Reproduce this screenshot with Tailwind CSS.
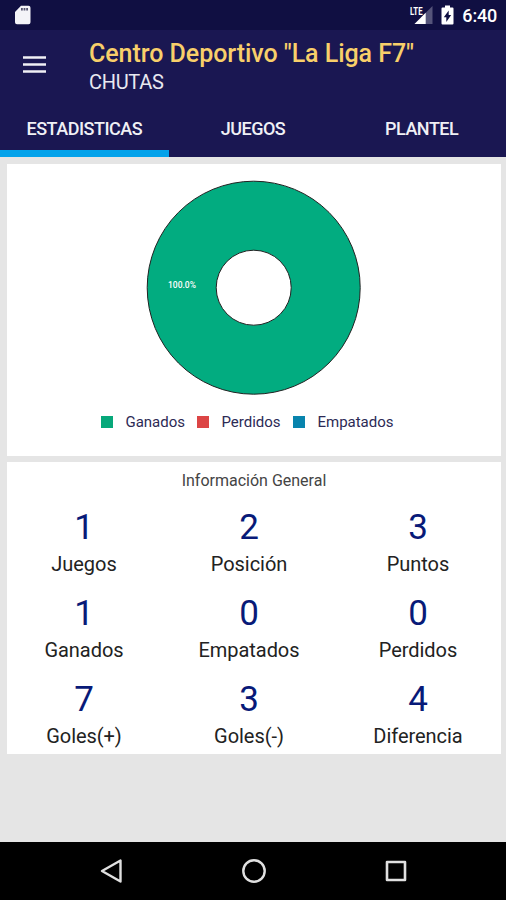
<!DOCTYPE html>
<html lang="es">
<head>
  <meta charset="UTF-8">
  <meta name="viewport" content="width=device-width, initial-scale=1.0">
  <title>Centro Deportivo "La Liga F7"</title>
  <script src="https://cdn.jsdelivr.net/npm/@tailwindcss/browser@4"></script>
</head>
<body class="flex h-[900px] w-[506px] flex-col overflow-hidden bg-[#e5e5e5] font-['Roboto',sans-serif]">
  <!-- Status bar -->
  <div class="flex h-[30px] shrink-0 items-center justify-between bg-[#100f42] pr-[9px] pl-[14px] text-white">
    <svg class="h-[20px] w-[17px]" viewBox="0 0 17 20">
      <path fill="#f4f4f8" d="M7 .8h7.500a2 2 0 0 1 2 2v14.400a2 2 0 0 1-2 2h-11.500a2 2 0 0 1-2-2V7z"/>
      <path stroke="#55546f" stroke-width="2.400" stroke-dasharray="1.800 .8" d="M7 4.200h7.500"/>
    </svg>
    <div class="flex items-center">
      <svg class="h-[20px] w-[24px]" viewBox="0 0 24 20">
        <path fill="#55547a" d="M23.500 1v18H5.500z"/>
        <path fill="#100f42" d="M0 0h13.500v11H0z"/>
        <path fill="#fff" d="M16.700 7.800V19H5.500z"/>
        <text x="1" y="9.800" font-size="11" font-weight="700" textLength="12.500" lengthAdjust="spacingAndGlyphs" fill="#fff">LTE</text>
      </svg>
      <svg class="ml-[8px] h-[20px] w-[13px]" viewBox="0 0 13 20">
        <path fill="#fff" d="M4 .5h5v2h2.500a1 1 0 0 1 1 1v15a1 1 0 0 1-1 1h-10a1 1 0 0 1-1-1v-15a1 1 0 0 1 1-1H4z"/>
        <path fill="#100f42" d="M7.700 5.500v4.500h2.500L5.300 17v-4.700H2.800z"/>
      </svg>
      <span class="ml-[8px] pt-[2px] text-[18px] leading-none font-medium tracking-[-0.2px]">6:40</span>
    </div>
  </div>

  <!-- App bar -->
  <header class="flex h-[127px] shrink-0 flex-col bg-[#1a1752] text-white">
    <div class="flex h-[70px] pl-[23px]">
      <svg class="mt-[26px] h-[17px] w-[23px]" viewBox="0 0 23 17">
        <path stroke="#f0f0f5" stroke-width="2.600" d="M0 1.500h23M0 8.500h23M0 15.500h23"/>
      </svg>
      <div class="ml-[43px] pt-[8px]">
        <h1 class="text-[25px] leading-[31px] font-medium tracking-[-0.05px] whitespace-nowrap text-[#f8cf6a]">Centro Deportivo "La Liga F7"</h1>
        <p class="text-[20px] leading-[27px] tracking-[-0.3px] text-[#e8e8f0]">CHUTAS</p>
      </div>
    </div>
    <nav class="grid flex-1 grid-cols-3 text-center text-[18px] font-medium tracking-[-0.5px] text-[#f0f0f5]">
      <a class="border-b-[7px] border-[#03a2ea] pt-[15px]">ESTADISTICAS</a>
      <a class="pt-[15px]">JUEGOS</a>
      <a class="pt-[15px]">PLANTEL</a>
    </nav>
  </header>

  <main class="flex flex-1 flex-col gap-[6px] pt-[7px] pr-[5px] pl-[7px]">
    <!-- Results chart -->
    <section class="flex h-[292px] flex-col items-center bg-white">
      <svg class="mt-[16px] h-[216px] w-[216px]" viewBox="0 0 216 216">
        <circle cx="107.700" cy="107.700" r="72" fill="none" stroke="#02ac80" stroke-width="69"/>
        <circle cx="107.700" cy="107.700" r="106.500" fill="none" stroke="#222" stroke-width="1"/>
        <circle cx="107.700" cy="107.700" r="37.500" fill="none" stroke="#222" stroke-width="1"/>
        <text x="36" y="108" font-size="8.500" font-weight="500" text-anchor="middle" fill="#fff">100.0%</text>
      </svg>
      <div class="mt-[16px] flex items-center pr-[13px] text-[15px] leading-[20px] text-[#2c2a55]">
        <i class="mr-[12px] size-[12px] bg-[#07a87a]"></i><span class="w-[72px]">Ganados</span>
        <i class="mr-[12px] size-[12px] bg-[#dc4545]"></i><span class="w-[72px]">Perdidos</span>
        <i class="mr-[12px] size-[12px] bg-[#0884ad]"></i><span>Empatados</span>
      </div>
    </section>

    <!-- General stats -->
    <section class="h-[292px] bg-white">
      <h2 class="pt-[9px] text-center text-[16px] leading-[20px] text-[#444]">Información General</h2>
      <div class="mt-[16px] grid auto-rows-[86px] grid-cols-[154px_176px_162px] text-center text-[20px] text-[#222]">
        <div><div class="text-[35px] leading-[42px] text-[#081a78]">1</div><div class="leading-[31px] tracking-[-0.05px]">Juegos</div></div>
        <div><div class="text-[35px] leading-[42px] text-[#081a78]">2</div><div class="leading-[31px] tracking-[-0.05px]">Posición</div></div>
        <div><div class="text-[35px] leading-[42px] text-[#081a78]">3</div><div class="leading-[31px] tracking-[-0.05px]">Puntos</div></div>
        <div><div class="text-[35px] leading-[42px] text-[#081a78]">1</div><div class="leading-[31px] tracking-[-0.05px]">Ganados</div></div>
        <div><div class="text-[35px] leading-[42px] text-[#081a78]">0</div><div class="leading-[31px] tracking-[-0.05px]">Empatados</div></div>
        <div><div class="text-[35px] leading-[42px] text-[#081a78]">0</div><div class="leading-[31px] tracking-[-0.05px]">Perdidos</div></div>
        <div><div class="text-[35px] leading-[42px] text-[#081a78]">7</div><div class="leading-[31px] tracking-[-0.05px]">Goles(+)</div></div>
        <div><div class="text-[35px] leading-[42px] text-[#081a78]">3</div><div class="leading-[31px] tracking-[-0.05px]">Goles(-)</div></div>
        <div><div class="text-[35px] leading-[42px] text-[#081a78]">4</div><div class="leading-[31px] tracking-[-0.05px]">Diferencia</div></div>
      </div>
    </section>
  </main>

  <!-- Navigation bar -->
  <footer class="flex h-[58px] shrink-0 items-center justify-between bg-black pr-[99px] pl-[100px]">
    <svg class="h-[24px] w-[22px]" viewBox="0 0 22 24" fill="none" stroke="#e0e0e0" stroke-width="2.400" stroke-linejoin="round">
      <path d="M20.500 1.500v21L2 12z"/>
    </svg>
    <svg class="size-[24px]" viewBox="0 0 24 24" fill="none" stroke="#e0e0e0" stroke-width="2.400">
      <circle cx="12" cy="12" r="10.700"/>
    </svg>
    <svg class="size-[22px]" viewBox="0 0 22 22" fill="none" stroke="#e0e0e0" stroke-width="2.600" stroke-linejoin="round">
      <path d="M2 2h18v18H2z"/>
    </svg>
  </footer>
</body>
</html>
